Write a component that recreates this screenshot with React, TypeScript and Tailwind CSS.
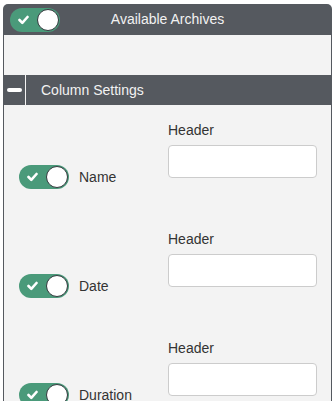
import React from 'react';

const Toggle: React.FC = () => (
  <div className="relative w-[50px] h-[24px] rounded-full bg-[#4a9a7a] shrink-0">
    <svg className="absolute left-[8px] top-[7px]" width="11" height="10" viewBox="0 0 11 10">
      <polyline points="1.5,5 4.3,7.8 9.5,2" fill="none" stroke="white" strokeWidth="2.6" strokeLinecap="round" strokeLinejoin="round" />
    </svg>
    <div className="absolute right-[1px] top-[1px] w-[22px] h-[22px] rounded-full bg-white border-[1.5px] border-[#34393e]" />
  </div>
);

const columns = ['Name', 'Date', 'Duration'];

const App: React.FC = () => {
  return (
    <div className="w-[336px] h-[401px] overflow-hidden bg-white pt-[4px] pl-[3px] font-['Liberation_Sans',Arial,sans-serif] text-[14px]">
      <div className="w-[329px]">
        <div className="h-[31px] bg-[#55595f] rounded-t-[5px] grid grid-cols-[1fr_auto_1fr] items-center">
          <div className="pl-[7px]">
            <Toggle />
          </div>
          <span className="text-[#f2f2f2]">Available Archives</span>
          <div />
        </div>
        <div className="h-[40px] bg-[#f3f3f3] border-x border-[#55595f]" />
        <div className="h-[30px] bg-[#55595f] flex items-stretch">
          <div className="w-[22px] flex items-center justify-center">
            <div className="w-[15px] h-[3.5px] rounded-full bg-white" />
          </div>
          <div className="w-px bg-[#f3f3f3]" />
          <div className="flex items-center pl-[15px] text-[#f2f2f2]">Column Settings</div>
        </div>
        <div className="bg-[#f3f3f3] border-x border-[#55595f]">
          {columns.map((c) => (
            <div key={c} className="h-[109px] flex">
              <div className="w-[164px] pl-[15px] pt-[60px]">
                <div className="flex items-center gap-[10px]">
                  <Toggle />
                  <span className="text-[#333]">{c}</span>
                </div>
              </div>
              <div className="w-[149px] pt-[17px] flex flex-col">
                <label className="text-[#333] leading-[17px]">Header</label>
                <input className="mt-[6px] h-[33px] w-[149px] rounded-[4px] border border-[#cccccc] bg-white" />
              </div>
            </div>
          ))}
        </div>
      </div>
    </div>
  );
};

export default App;
